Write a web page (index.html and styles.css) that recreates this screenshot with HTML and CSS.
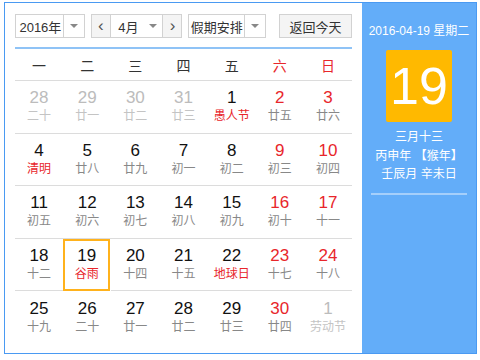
FILE: index.html
```html
<!DOCTYPE html>
<html lang="zh-CN">
<head>
    <meta charset="UTF-8">
    <title>万年历</title>
    <link rel="stylesheet" href="styles.css">
</head>
<body>

<div class="calendar">
    <div class="main">
        <div class="toolbar">
            <div class="select year">
                <span class="select-text">2016年</span>
                <span class="select-arrow"><i class="caret"></i></span>
            </div>
            <div class="select month">
                <span class="nav">&lsaquo;</span>
                <span class="select-text">4月</span>
                <span class="caret-plain"><i class="caret"></i></span>
                <span class="nav">&rsaquo;</span>
            </div>
            <div class="select holiday">
                <span class="select-text">假期安排</span>
                <span class="select-arrow"><i class="caret"></i></span>
            </div>
            <button class="today-btn">返回今天</button>
        </div>

        <div class="week-head">
            <span>一</span><span>二</span><span>三</span><span>四</span><span>五</span>
            <span class="red">六</span><span class="red">日</span>
        </div>

        <div class="days">
            <div class="day other"><b>28</b><em>二十</em></div>
            <div class="day other"><b>29</b><em>廿一</em></div>
            <div class="day other"><b>30</b><em>廿二</em></div>
            <div class="day other"><b>31</b><em>廿三</em></div>
            <div class="day"><b>1</b><em class="fest">愚人节</em></div>
            <div class="day weekend"><b>2</b><em>廿五</em></div>
            <div class="day weekend"><b>3</b><em>廿六</em></div>

            <div class="day"><b>4</b><em class="fest">清明</em></div>
            <div class="day"><b>5</b><em>廿八</em></div>
            <div class="day"><b>6</b><em>廿九</em></div>
            <div class="day"><b>7</b><em>初一</em></div>
            <div class="day"><b>8</b><em>初二</em></div>
            <div class="day weekend"><b>9</b><em>初三</em></div>
            <div class="day weekend"><b>10</b><em>初四</em></div>

            <div class="day"><b>11</b><em>初五</em></div>
            <div class="day"><b>12</b><em>初六</em></div>
            <div class="day"><b>13</b><em>初七</em></div>
            <div class="day"><b>14</b><em>初八</em></div>
            <div class="day"><b>15</b><em>初九</em></div>
            <div class="day weekend"><b>16</b><em>初十</em></div>
            <div class="day weekend"><b>17</b><em>十一</em></div>

            <div class="day"><b>18</b><em>十二</em></div>
            <div class="day today"><b>19</b><em class="fest">谷雨</em></div>
            <div class="day"><b>20</b><em>十四</em></div>
            <div class="day"><b>21</b><em>十五</em></div>
            <div class="day"><b>22</b><em class="fest">地球日</em></div>
            <div class="day weekend"><b>23</b><em>十七</em></div>
            <div class="day weekend"><b>24</b><em>十八</em></div>

            <div class="day last"><b>25</b><em>十九</em></div>
            <div class="day last"><b>26</b><em>二十</em></div>
            <div class="day last"><b>27</b><em>廿一</em></div>
            <div class="day last"><b>28</b><em>廿二</em></div>
            <div class="day last"><b>29</b><em>廿三</em></div>
            <div class="day last weekend"><b>30</b><em>廿四</em></div>
            <div class="day last other"><b>1</b><em>劳动节</em></div>
        </div>
    </div>

    <div class="side">
        <div class="side-date">2016-04-19 星期二</div>
        <div class="side-day">19</div>
        <div class="side-lunar">
            <p>三月十三</p>
            <p>丙申年 【猴年】</p>
            <p>壬辰月 辛未日</p>
        </div>
        <div class="side-line"></div>
    </div>
</div>

</body>
</html>
```

FILE: styles.css
```css
body {
    margin: 0;
    background-color: #ffffff;
    font-family: "Liberation Sans", "Noto Sans CJK SC", sans-serif;
    color: #222;
}
.calendar {
    display: flex;
    width: 471px;
    height: 350px;
    margin: 2px 0 0 4px;
    border: 1px solid #4a9af2;
}
.main {
    width: 337px;
    padding: 11px 10px 0 10px;
    background-color: #ffffff;
}
.toolbar {
    display: flex;
    height: 24px;
    gap: 6px;
    padding-bottom: 9px;
    border-bottom: 2px solid #8fc3f6;
}
.select {
    display: flex;
    height: 24px;
    box-sizing: border-box;
    border: 1px solid #d2d2d2;
    background-color: #ffffff;
    font-size: 13px;
    color: #333;
}
.select-text {
    display: flex;
    align-items: center;
    justify-content: center;
    flex: 1;
}
.select-arrow {
    display: flex;
    align-items: center;
    justify-content: center;
    width: 20px;
    border-left: 1px solid #d2d2d2;
}
.caret-plain {
    display: flex;
    align-items: center;
    justify-content: center;
    width: 18px;
}
.caret {
    width: 0;
    height: 0;
    border-left: 4px solid transparent;
    border-right: 4px solid transparent;
    border-top: 4px solid #888;
}
.year {
    width: 70px;
}
.year .select-text {
    padding-left: 2px;
}
.month {
    width: 92px;
}
.holiday {
    width: 78px;
}
.nav {
    display: flex;
    align-items: center;
    justify-content: center;
    width: 19px;
    background-color: #f4f4f4;
    font-size: 17px;
    color: #555;
    line-height: 1;
    padding-bottom: 2px;
    box-sizing: border-box;
}
.month .nav:first-child {
    border-right: 1px solid #d2d2d2;
}
.month .nav:last-child {
    border-left: 1px solid #d2d2d2;
}
.month .select-text {
    justify-content: flex-end;
    padding-right: 6px;
}
.today-btn {
    margin-left: 7px;
    width: 73px;
    height: 24px;
    border: 1px solid #d2d2d2;
    background-color: #f4f4f4;
    font-family: inherit;
    font-size: 13px;
    color: #333;
    padding: 0;
}
.week-head {
    display: grid;
    grid-template-columns: repeat(7, 1fr);
    height: 31px;
    align-items: center;
    border-bottom: 1px solid #dcdcdc;
    font-size: 14px;
    color: #333;
    text-align: center;
}
.red {
    color: #e8262b;
}
.days {
    display: grid;
    grid-template-columns: repeat(7, 1fr);
    grid-auto-rows: 52.5px;
}
.day {
    display: flex;
    flex-direction: column;
    align-items: center;
    justify-content: center;
    border-bottom: 1px solid #dcdcdc;
    box-sizing: border-box;
}
.day.last {
    border-bottom: none;
}
.day b {
    font-weight: normal;
    font-size: 17px;
    line-height: 20px;
    color: #111;
}
.day em {
    font-style: normal;
    font-size: 12px;
    line-height: 17px;
    color: #888;
}
.day em.fest {
    color: #e8262b;
}
.day.weekend b {
    color: #e8262b;
}
.day.other b {
    color: #bcbcbc;
}
.day.other em {
    color: #c4c4c4;
}
.day.today {
    border: 2px solid #ffb21c;
    margin: 0 1px 0 0;
}
.side {
    flex: 1;
    display: flex;
    flex-direction: column;
    align-items: center;
    background-color: #63adf9;
    color: #ffffff;
}
.side-date {
    margin-top: 18px;
    font-size: 12px;
}
.side-day {
    display: flex;
    align-items: center;
    justify-content: center;
    width: 66px;
    height: 72px;
    margin-top: 12px;
    background-color: #ffb900;
    border-radius: 2px;
    font-size: 52px;
    color: #ffffff;
}
.side-lunar {
    margin-top: 6px;
    text-align: center;
    font-size: 12px;
}
.side-lunar p {
    margin: 0;
    line-height: 18.5px;
}
.side-line {
    width: 96px;
    height: 2px;
    margin-top: 9px;
    background-color: #a5cffb;
}
```
